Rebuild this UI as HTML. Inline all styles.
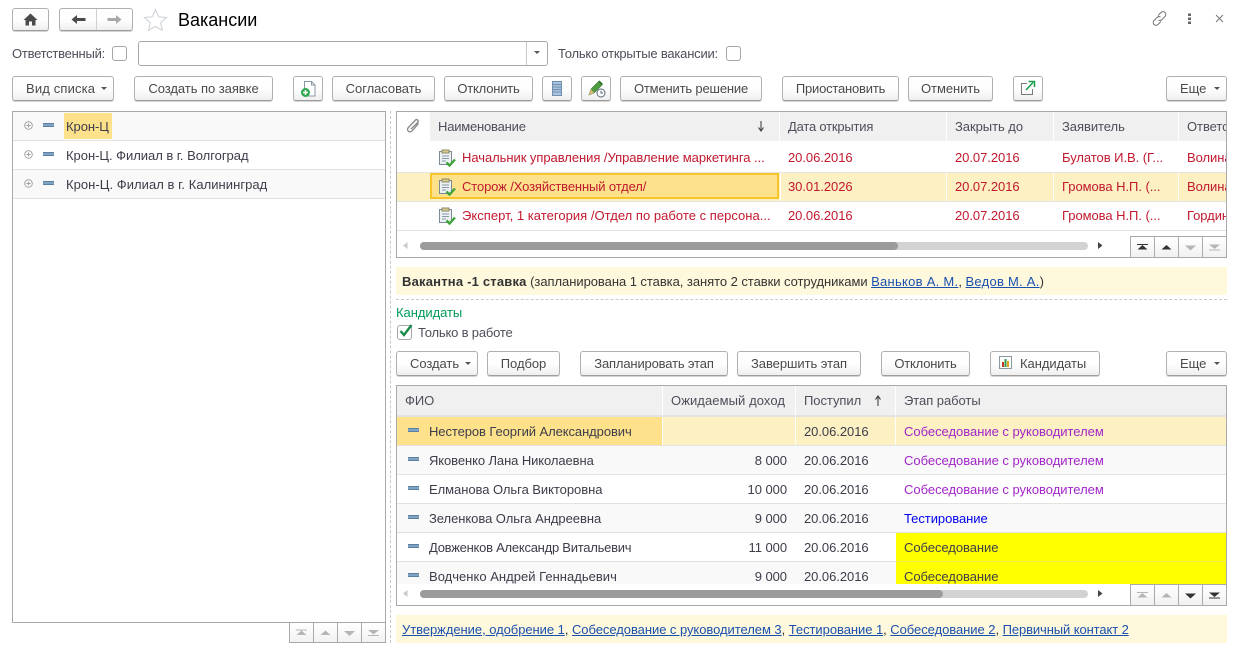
<!DOCTYPE html>
<html lang="ru"><head><meta charset="utf-8"><title>Вакансии</title>
<style>
*{box-sizing:border-box}
html,body{margin:0;padding:0;background:#fff}
#p{position:relative;width:1245px;height:653px;overflow:hidden;background:#fff;font:13px/14px "Liberation Sans",Arial,sans-serif;color:#3d3d4a;letter-spacing:-.05px}
#p div,#p svg,#p a{position:absolute}
.t{white-space:nowrap;height:14px}
.b{height:25px;border:1px solid #b0b0b0;border-bottom-color:#9c9c9c;border-radius:3px;background:linear-gradient(#fff,#fdfdfd 55%,#efefef);box-shadow:0 1px 0 #d4d4d4;text-align:center;line-height:23px;white-space:nowrap;color:#4a4a4a}
.caret{width:0;height:0;border-left:3.5px solid transparent;border-right:3.5px solid transparent;border-top:3.5px solid #555}
.f{border:1px solid #a9a9a9;background:#fff}
.h{background:#f0f0f0;color:#4e4e5a;line-height:29px;padding-left:8px;white-space:nowrap;overflow:hidden}
.c{width:15px;height:15px;border:1px solid #a6a6a6;border-radius:3px;background:#fff}
.l{height:1px;background:#e3e3e3}
.m{width:11px;height:4px;background:#7fa3c0;border-top:1px solid #5c80a2;border-bottom:1px solid #5c80a2}
.r{color:#c2182e}
.pp{color:#a326c9}
a{color:#1a4fae;text-decoration:underline}
.n{width:24px;height:21px;border-left:1px solid #a9a9a9;border-top:1px solid #a9a9a9;background:linear-gradient(#fff,#f1f1f1)}
.clip{overflow:hidden;white-space:nowrap}
</style></head><body><div id="p">
<svg width="0" height="0" style="left:0;top:0"><defs>
<g id="doc"><path d="M2.500 3.500h12v13h-12z" fill="#eef1f4" stroke="#7c8a96"/><path d="M5 2h7v3H5z" fill="#d8c98a" stroke="#8b8b6b"/><path d="M5 8h7M5 10.500h7M5 13h4" stroke="#8899a8"/><path d="M9.500 14.500l3 3 5.500-6" fill="none" stroke="#3da33a" stroke-width="2.400"/></g>
</defs></svg>

<!-- top bar -->
<div class="b" style="left:12px;top:8px;width:37px;height:23px"></div>
<svg style="left:23px;top:13px" width="15" height="13" viewBox="0 0 15 13"><path d="M7.500 0.500L0.500 7h2v5.500h3.500V8.500h3v4h3.500V7h2z" fill="#4a4a4a"/></svg>
<div class="b" style="left:59px;top:8px;width:74px;height:23px"></div>
<div style="left:96px;top:9px;width:1px;height:21px;background:#cfcfcf"></div>
<svg style="left:71px;top:14px" width="15" height="11" viewBox="0 0 15 11"><path d="M0.500 5.500L6 1v3h8.500v3H6v3z" fill="#4a4a4a"/></svg>
<svg style="left:107px;top:14px" width="15" height="11" viewBox="0 0 15 11"><path d="M14.500 5.500L9 1v3H0.500v3H9v3z" fill="#a8a8a8"/></svg>
<svg style="left:143px;top:8px" width="25" height="23" viewBox="0 0 25 23"><path d="M12.500 1.500l3.200 7.300 7.800.7-5.900 5.200 1.800 7.700-6.900-4.100-6.900 4.100 1.800-7.700L1.500 9.500l7.800-.7z" fill="#fff" stroke="#d3d7db" stroke-width="1.200"/></svg>
<div class="t" style="left:178px;top:10px;font-size:18px;line-height:20px;height:20px;color:#000;letter-spacing:0">Вакансии</div>
<svg style="left:1151px;top:10px" width="17" height="17" viewBox="0 0 17 17"><g fill="none" stroke="#777" stroke-width="1"><path d="M7 5.500l3-3a2.800 2.800 0 0 1 4 4l-3 3a2.800 2.800 0 0 1-3.500.4"/><path d="M10 11.500l-3 3a2.800 2.800 0 0 1-4-4l3-3a2.800 2.800 0 0 1 3.500-.4"/></g></svg>
<svg style="left:1187px;top:13px" width="5" height="12" viewBox="0 0 5 12"><g fill="#666"><rect x="1" y="0.500" width="3" height="2.500"/><rect x="1" y="4.500" width="3" height="2.500"/><rect x="1" y="8.500" width="3" height="2.500"/></g></svg>
<svg style="left:1215px;top:14px" width="9" height="9" viewBox="0 0 9 9"><path d="M1 1l7 7M8 1L1 8" stroke="#777" stroke-width="1"/></svg>

<!-- filter -->
<div class="t" style="left:12px;top:47px;color:#4e4e5a;letter-spacing:-.25px">Ответственный:</div>
<div class="c" style="left:112px;top:46px"></div>
<div style="left:138px;top:41px;width:410px;height:25px;border:1px solid #a9a9a9;border-radius:3px;background:#fff"></div>
<div style="left:526px;top:42px;width:1px;height:23px;background:#c9c9c9"></div>
<div class="caret" style="left:534px;top:51px"></div>
<div class="t" style="left:558px;top:47px;color:#4e4e5a;letter-spacing:-.21px">Только открытые вакансии:</div>
<div class="c" style="left:726px;top:46px"></div>

<!-- toolbar 1 -->
<div class="b" style="left:12px;top:76px;width:102px;text-align:left;padding-left:13px;letter-spacing:.15px">Вид списка</div><div class="caret" style="left:101px;top:87px"></div>
<div class="b" style="left:134px;top:76px;width:139px">Создать по заявке</div>
<div class="b" style="left:293px;top:76px;width:30px"></div>
<svg style="left:300px;top:80px" width="17" height="18" viewBox="0 0 17 18"><path d="M4.500 1.500h7l3.500 3.500v11h-10.500z" fill="#fff" stroke="#8a97a5"/><path d="M11.500 1.500v3.500h3.500" fill="none" stroke="#8a97a5"/><circle cx="5.500" cy="12.500" r="4.500" fill="#2fa84f"/><path d="M3 12.500h5M5.500 10v5" stroke="#fff" stroke-width="1.500"/></svg>
<div class="b" style="left:332px;top:76px;width:103px">Согласовать</div>
<div class="b" style="left:444px;top:76px;width:89px;letter-spacing:-.2px">Отклонить</div>
<div class="b" style="left:542px;top:76px;width:30px"></div>
<svg style="left:551px;top:81px" width="12" height="15" viewBox="0 0 12 15"><rect x="1.500" y=".5" width="9" height="14" fill="#a9c4dc" stroke="#6f8fae"/><path d="M2 3.500h8M2 6h8M2 8.500h8M2 11h8" stroke="#6f8fae"/></svg>
<div class="b" style="left:581px;top:76px;width:30px"></div>
<svg style="left:588px;top:79px" width="18" height="19" viewBox="0 0 18 19"><path d="M1 16l2-6L10.500 2.500 14 6 6 14z" fill="#4d9a3f" stroke="#3b7a30" stroke-width=".6"/><path d="M10.500 2.500l1-1 3.500 3.500-1 1z" fill="#2f6a2a"/><path d="M1 16l2-6 3 4z" fill="#e0b878"/><circle cx="13" cy="14" r="4" fill="#fff" stroke="#5a6b7a"/><path d="M13 11.800V14h2" fill="none" stroke="#5a6b7a"/></svg>
<div class="b" style="left:620px;top:76px;width:142px;letter-spacing:-.17px">Отменить решение</div>
<div class="b" style="left:782px;top:76px;width:117px;letter-spacing:-.2px">Приостановить</div>
<div class="b" style="left:908px;top:76px;width:85px">Отменить</div>
<div class="b" style="left:1013px;top:76px;width:30px"></div>
<svg style="left:1020px;top:80px" width="16" height="16" viewBox="0 0 16 16"><path d="M7 3.500H1.500v11h11V9" fill="none" stroke="#7a7a7a"/><path d="M6 10l7-7.500M8.500 1.500H14.500V7" fill="none" stroke="#1a9a4a" stroke-width="1.500"/></svg>
<div class="b" style="left:1166px;top:76px;width:61px;text-align:left;padding-left:13px">Еще</div><div class="caret" style="left:1214px;top:87px"></div>

<!-- tree -->
<div class="f" style="left:12px;top:111px;width:374px;height:512px"></div>
<div style="left:13px;top:112px;width:372px;height:28px;background:#f9f9f9"></div>
<div style="left:13px;top:170px;width:372px;height:28px;background:#f9f9f9"></div>
<div class="l" style="left:13px;top:140px;width:372px"></div>
<div class="l" style="left:13px;top:169px;width:372px"></div>
<div class="l" style="left:13px;top:198px;width:372px"></div>
<div style="left:64px;top:113px;width:48px;height:26px;background:#fde28b"></div>
<svg style="left:24px;top:121px" width="9" height="67" viewBox="0 0 9 67"><g fill="none" stroke="#9c9c9c" stroke-width=".9"><g id="pl"><circle cx="4.500" cy="4.500" r="3.800"/><path d="M2.500 4.500h4M4.500 2.500v4"/></g><use href="#pl" y="29"/><use href="#pl" y="58"/></g></svg>
<div class="m" style="left:43px;top:123px"></div><div class="m" style="left:43px;top:152px"></div><div class="m" style="left:43px;top:181px"></div>
<div class="t" style="left:66px;top:120px">Крон-Ц</div>
<div class="t" style="left:66px;top:149px;letter-spacing:-.03px">Крон-Ц. Филиал в г. Волгоград</div>
<div class="t" style="left:66px;top:178px;letter-spacing:.05px">Крон-Ц. Филиал в г. Калининград</div>
<!-- tree nav -->
<div class="n" style="left:289px;top:622px"></div><div class="n" style="left:313px;top:622px"></div><div class="n" style="left:337px;top:622px"></div><div class="n" style="left:361px;top:622px"></div>
<div style="left:289px;top:642px;width:97px;height:1px;background:#a9a9a9"></div>
<div style="left:385px;top:622px;width:1px;height:21px;background:#a9a9a9"></div>
<svg style="left:289px;top:622px" width="96" height="21" viewBox="0 0 96 21" fill="#b5b5b5"><path d="M7 7.500h11v1H7zM12.500 8.500l5 4.500h-10z"/><path d="M36.500 8.500l5 4.500h-10z"/><path d="M55 9h11l-5.500 5z"/><path d="M79 8h11l-5.500 4.500zM79 13h11v1H79z"/></svg>
<div style="left:390px;top:111px;width:0;height:532px;border-left:1px dashed #c9c9c9"></div>

<!-- table 1 -->
<div class="f" style="left:396px;top:111px;width:831px;height:147px"></div>
<div class="h" style="left:397px;top:112px;width:32px"></div>
<svg style="left:406px;top:118px" width="14" height="16" viewBox="0 0 14 16"><path d="M12.500 5.500L6 13a2.500 2.500 0 0 1-3.800-3.300L9.500 2a1.700 1.700 0 0 1 2.500 2.200L5 11" fill="none" stroke="#858585" stroke-width="1.300"/></svg>
<div class="h" style="left:430px;top:112px;width:349px;letter-spacing:-.2px">Наименование</div>
<svg style="left:757px;top:121px" width="8" height="11" viewBox="0 0 8 11"><path d="M4 0v9M1.500 6.500L4 10l2.500-3.500" fill="none" stroke="#444" stroke-width="1.100"/></svg>
<div class="h" style="left:780px;top:112px;width:166px;letter-spacing:-.2px">Дата открытия</div>
<div class="h" style="left:947px;top:112px;width:106px">Закрыть до</div>
<div class="h" style="left:1054px;top:112px;width:124px">Заявитель</div>
<div class="h" style="left:1179px;top:112px;width:47px">Ответс</div>
<div style="left:397px;top:173px;width:829px;height:28px;background:#fdf0c3"></div>
<div class="l" style="left:397px;top:172px;width:829px"></div><div class="l" style="left:397px;top:201px;width:829px"></div><div class="l" style="left:397px;top:230px;width:829px"></div>
<div style="left:780px;top:173px;width:1px;height:28px;background:#fff"></div><div style="left:946px;top:173px;width:1px;height:28px;background:#fff"></div><div style="left:1053px;top:173px;width:1px;height:28px;background:#fff"></div><div style="left:1178px;top:173px;width:1px;height:28px;background:#fff"></div>
<div style="left:430px;top:173px;width:349px;height:26px;background:#fde28b;border:2px solid #f7c52b"></div>
<svg style="left:437px;top:148px" width="19" height="19"><use href="#doc"/></svg>
<svg style="left:437px;top:177px" width="19" height="19"><use href="#doc"/></svg>
<svg style="left:437px;top:206px" width="19" height="19"><use href="#doc"/></svg>
<div class="t r" style="left:462px;top:151px">Начальник управления /Управление маркетинга ...</div>
<div class="t r" style="left:462px;top:180px;letter-spacing:-.12px">Сторож /Хозяйственный отдел/</div>
<div class="t r" style="left:462px;top:209px;letter-spacing:.03px">Эксперт, 1 категория /Отдел по работе с персона...</div>
<div class="t r" style="left:788px;top:151px">20.06.2016</div><div class="t r" style="left:788px;top:180px">30.01.2026</div><div class="t r" style="left:788px;top:209px">20.06.2016</div>
<div class="t r" style="left:955px;top:151px">20.07.2016</div><div class="t r" style="left:955px;top:180px">20.07.2016</div><div class="t r" style="left:955px;top:209px">20.07.2016</div>
<div class="t r" style="left:1062px;top:151px">Булатов И.В. (Г...</div><div class="t r" style="left:1062px;top:180px">Громова Н.П. (...</div><div class="t r" style="left:1062px;top:209px">Громова Н.П. (...</div>
<div class="t r clip" style="left:1187px;top:151px;width:39px">Волина</div><div class="t r clip" style="left:1187px;top:180px;width:39px">Волина</div><div class="t r clip" style="left:1187px;top:209px;width:39px">Гордина</div>
<svg style="left:403px;top:242px" width="5" height="7" viewBox="0 0 5 7"><path d="M4.500 0v7L0 3.500z" fill="#c9c9c9"/></svg>
<div style="left:420px;top:242px;width:668px;height:8px;border-radius:4px;background:#d2d2d2"></div>
<div style="left:420px;top:242px;width:478px;height:8px;border-radius:4px;background:#9b9b9b"></div>
<svg style="left:1098px;top:242px" width="5" height="7" viewBox="0 0 5 7"><path d="M0 0v7l4.500-3.500z" fill="#444"/></svg>
<div class="n" style="left:1130px;top:236px"></div><div class="n" style="left:1154px;top:236px"></div><div class="n" style="left:1178px;top:236px"></div><div class="n" style="left:1202px;top:236px"></div>
<svg style="left:1130px;top:236px" width="96" height="21" viewBox="0 0 96 21"><g fill="#333"><path d="M7 8h11v1H7zM12.500 9l5 4.500h-10z"/><path d="M36.500 9l5 4.500h-10z"/></g><g fill="#b5b5b5"><path d="M55 9.500h11l-5.500 5z"/><path d="M79 8.500h11l-5.500 4.500zM79 13.500h11v1H79z"/></g></svg>

<!-- info 1 -->
<div style="left:396px;top:267px;width:831px;height:28px;background:#fef9dc"></div>
<div class="t" style="left:402px;top:275px;color:#333"><b style="letter-spacing:.2px">Вакантна -1 ставка</b> (запланирована 1 ставка, занято 2 ставки сотрудниками <a style="position:static;letter-spacing:.27px" href="#">Ваньков А. М.</a>, <a style="position:static;letter-spacing:.25px" href="#">Ведов М. А.</a>)</div>
<div style="left:396px;top:299px;width:831px;height:0;border-top:1px dashed #c9c9c9"></div>
<div class="t" style="left:396px;top:306px;color:#009a5a">Кандидаты</div>
<div class="c" style="left:397px;top:325px"></div>
<svg style="left:398px;top:323px" width="16" height="15" viewBox="0 0 16 15"><path d="M2.500 8l3.500 4 7.500-10" fill="none" stroke="#1a8a4a" stroke-width="2.400"/></svg>
<div class="t" style="left:418px;top:326px;color:#4e4e5a;letter-spacing:-.18px">Только в работе</div>

<!-- toolbar 2 -->
<div class="b" style="left:396px;top:351px;width:82px;text-align:left;padding-left:13px">Создать</div><div class="caret" style="left:465px;top:362px"></div>
<div class="b" style="left:487px;top:351px;width:73px">Подбор</div>
<div class="b" style="left:580px;top:351px;width:148px;letter-spacing:-.16px">Запланировать этап</div>
<div class="b" style="left:737px;top:351px;width:124px">Завершить этап</div>
<div class="b" style="left:881px;top:351px;width:89px;letter-spacing:-.2px">Отклонить</div>
<div class="b" style="left:990px;top:351px;width:110px;text-align:left;padding-left:29px">Кандидаты</div>
<svg style="left:999px;top:355px" width="13" height="15" viewBox="0 0 13 15"><path d="M.5 1.500h12v12H.5z" fill="#fff" stroke="#8a97a5"/><rect x="3" y="7" width="2" height="5" fill="#c0392b"/><rect x="5.500" y="4" width="2" height="8" fill="#2e9a4a"/><rect x="8" y="6" width="2" height="6" fill="#e0a020"/></svg>
<div class="b" style="left:1166px;top:351px;width:61px;text-align:left;padding-left:13px">Еще</div><div class="caret" style="left:1214px;top:362px"></div>

<!-- table 2 -->
<div class="f" style="left:396px;top:385px;width:831px;height:221px"></div>
<div class="h" style="left:397px;top:386px;width:265px">ФИО</div>
<div class="h" style="left:663px;top:386px;width:132px;letter-spacing:.08px">Ожидаемый доход</div>
<div class="h" style="left:796px;top:386px;width:99px">Поступил</div>
<svg style="left:874px;top:395px" width="8" height="11" viewBox="0 0 8 11"><path d="M4 11V2M1.500 4.500L4 1l2.500 3.500" fill="none" stroke="#444" stroke-width="1.100"/></svg>
<div class="h" style="left:896px;top:386px;width:330px">Этап работы</div>

<div style="left:397px;top:417px;width:829px;height:28px;background:#fdf0c3"></div>
<div style="left:397px;top:417px;width:265px;height:28px;background:#fde28b"></div>
<div style="left:662px;top:417px;width:1px;height:28px;background:#fff"></div><div style="left:795px;top:417px;width:1px;height:28px;background:#fff"></div><div style="left:895px;top:417px;width:1px;height:28px;background:#fff"></div>
<div style="left:397px;top:446px;width:829px;height:28px;background:#f9f9f9"></div>
<div style="left:397px;top:504px;width:829px;height:28px;background:#f9f9f9"></div>
<div style="left:397px;top:562px;width:829px;height:22px;background:#f9f9f9"></div>
<div class="l" style="left:397px;top:415px;width:829px;height:2px"></div><div class="l" style="left:397px;top:445px;width:829px"></div><div class="l" style="left:397px;top:474px;width:829px"></div><div class="l" style="left:397px;top:503px;width:829px"></div><div class="l" style="left:397px;top:532px;width:829px"></div><div class="l" style="left:397px;top:561px;width:829px"></div>
<div style="left:896px;top:533px;width:330px;height:51px;background:#ff0"></div>
<div style="left:896px;top:561px;width:330px;height:1px;background:#eeee50"></div>

<div class="m" style="left:408px;top:428px"></div><div class="m" style="left:408px;top:457px"></div><div class="m" style="left:408px;top:486px"></div><div class="m" style="left:408px;top:515px"></div><div class="m" style="left:408px;top:544px"></div><div class="m" style="left:408px;top:573px"></div>
<div class="t" style="left:429px;top:425px;letter-spacing:-.08px">Нестеров Георгий Александрович</div>
<div class="t" style="left:429px;top:454px;letter-spacing:-.09px">Яковенко Лана Николаевна</div>
<div class="t" style="left:429px;top:483px">Елманова Ольга Викторовна</div>
<div class="t" style="left:429px;top:512px">Зеленкова Ольга Андреевна</div>
<div class="t" style="left:429px;top:541px;letter-spacing:-.25px">Довженков Александр Витальевич</div>
<div class="t clip" style="left:429px;top:570px;height:14px;letter-spacing:.02px">Водченко Андрей Геннадьевич</div>
<div class="t" style="right:458px;top:454px">8 000</div>
<div class="t" style="right:458px;top:483px">10 000</div>
<div class="t" style="right:458px;top:512px">9 000</div>
<div class="t" style="right:458px;top:541px">11 000</div>
<div class="t" style="right:458px;top:570px">9 000</div>
<div class="t" style="left:804px;top:425px">20.06.2016</div><div class="t" style="left:804px;top:454px">20.06.2016</div><div class="t" style="left:804px;top:483px">20.06.2016</div><div class="t" style="left:804px;top:512px">20.06.2016</div><div class="t" style="left:804px;top:541px">20.06.2016</div><div class="t" style="left:804px;top:570px">20.06.2016</div>
<div class="t pp" style="left:904px;top:425px;letter-spacing:-.02px">Собеседование с руководителем</div>
<div class="t pp" style="left:904px;top:454px;letter-spacing:-.02px">Собеседование с руководителем</div>
<div class="t pp" style="left:904px;top:483px;letter-spacing:-.02px">Собеседование с руководителем</div>
<div class="t" style="left:904px;top:512px;color:#0000ee">Тестирование</div>
<div class="t" style="left:904px;top:541px">Собеседование</div>
<div class="t" style="left:904px;top:570px">Собеседование</div>
<div style="left:397px;top:584px;width:829px;height:21px;background:#fff"></div>
<svg style="left:403px;top:590px" width="5" height="7" viewBox="0 0 5 7"><path d="M4.500 0v7L0 3.500z" fill="#c9c9c9"/></svg>
<div style="left:420px;top:590px;width:668px;height:8px;border-radius:4px;background:#d2d2d2"></div>
<div style="left:420px;top:590px;width:523px;height:8px;border-radius:4px;background:#9b9b9b"></div>
<svg style="left:1098px;top:590px" width="5" height="7" viewBox="0 0 5 7"><path d="M0 0v7l4.500-3.500z" fill="#444"/></svg>
<div class="n" style="left:1130px;top:584px"></div><div class="n" style="left:1154px;top:584px"></div><div class="n" style="left:1178px;top:584px"></div><div class="n" style="left:1202px;top:584px"></div>
<svg style="left:1130px;top:584px" width="96" height="21" viewBox="0 0 96 21"><g fill="#b5b5b5"><path d="M7 8h11v1H7zM12.500 9l5 4.500h-10z"/><path d="M36.500 9l5 4.500h-10z"/></g><g fill="#333"><path d="M55 9.500h11l-5.500 5z"/><path d="M79 8.500h11l-5.500 4.500zM79 13.500h11v1H79z"/></g></svg>

<!-- info 2 -->
<div style="left:396px;top:615px;width:831px;height:28px;background:#fef9dc"></div>
<div class="t" style="left:402px;top:623px;color:#333"><a style="position:static" href="#">Утверждение, одобрение 1</a>, <a style="position:static" href="#">Собеседование с руководителем 3</a>, <a style="position:static" href="#">Тестирование 1</a>, <a style="position:static" href="#">Собеседование 2</a>, <a style="position:static;letter-spacing:-.1px" href="#">Первичный контакт 2</a></div>
</div></body></html>
